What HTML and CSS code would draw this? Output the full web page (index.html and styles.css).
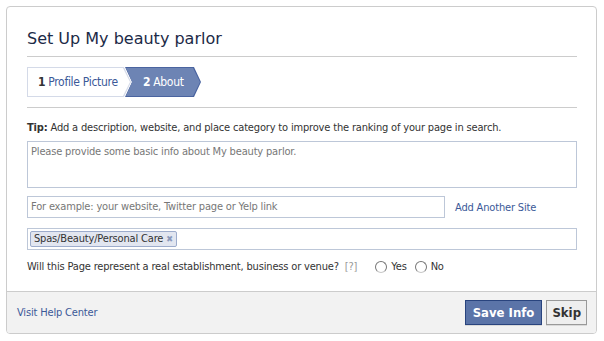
FILE: index.html
```html
<!DOCTYPE html>
<html lang="en">
<head>
    <meta charset="UTF-8">
    <title>Set Up My beauty parlor</title>
    <link rel="stylesheet" href="styles.css">
</head>
<body>
    <div class="dialog">
        <div class="dialog-body">
            <h2 class="dialog-title">Set Up My beauty parlor</h2>
            <div class="steps">
                <div class="step step-done"><div class="step-inner"><b>1</b> Profile Picture</div></div>
                <div class="step step-active"><div class="step-inner"><b>2</b> About</div></div>
            </div>
            <p class="tip"><b>Tip:</b> Add a description, website, and place category to improve the ranking of your page in search.</p>
            <div class="field field-area">Please provide some basic info about My beauty parlor.</div>
            <div class="site-row">
                <div class="field field-site">For example: your website, Twitter page or Yelp link</div>
                <a class="link" href="#">Add Another Site</a>
            </div>
            <div class="field field-tokens">
                <span class="token">Spas/Beauty/Personal Care <span class="token-x">✖</span></span>
            </div>
            <div class="question">
                <span>Will this Page represent a real establishment, business or venue?</span>
                <span class="help">[?]</span>
                <label class="radio"><span class="radio-dot"></span>Yes</label>
                <label class="radio"><span class="radio-dot"></span>No</label>
            </div>
        </div>
        <div class="dialog-footer">
            <a class="link" href="#">Visit Help Center</a>
            <div class="buttons">
                <button class="btn btn-primary">Save Info</button>
                <button class="btn">Skip</button>
            </div>
        </div>
    </div>
</body>
</html>
```

FILE: styles.css
```css
body {
    margin: 0;
    padding: 0;
    background-color: #ffffff;
    font-family: "DejaVu Sans Condensed", "DejaVu Sans", Tahoma, sans-serif;
    font-size: 11px;
    letter-spacing: -0.17px;
    color: #333333;
}
.dialog {
    margin: 6px;
    width: 589px;
    height: 326px;
    border: 1px solid #cccccc;
    border-radius: 4px;
    display: flex;
    flex-direction: column;
    overflow: hidden;
}
.dialog-body {
    flex-grow: 1;
    padding: 0 19px 0 20px;
}
.dialog-title {
    margin: 0;
    padding: 22px 0 8px;
    font-family: "DejaVu Sans", Tahoma, sans-serif;
    font-size: 16px;
    font-weight: normal;
    letter-spacing: 0;
    color: #1c2a47;
    border-bottom: 1px solid #cccccc;
}
.steps {
    display: flex;
    padding: 10px 0;
    border-bottom: 1px solid #cccccc;
}
.step {
    height: 30px;
    clip-path: polygon(0 0, calc(100% - 7px) 0, 100% 50%, calc(100% - 7px) 100%, 0 100%);
}
.step-inner {
    height: 28px;
    margin: 1px;
    display: flex;
    align-items: center;
    font-size: 12px;
    letter-spacing: -0.3px;
    clip-path: polygon(0 0, calc(100% - 7px) 0, 100% 50%, calc(100% - 7px) 100%, 0 100%);
}
.step-done {
    width: 104px;
    background-color: #d4dae8;
}
.step-done .step-inner {
    background-color: #ffffff;
    color: #3b5998;
    padding-left: 10px;
}
.step-done b {
    color: #333333;
    margin-right: 3px;
}
.step-active {
    width: 76px;
    margin-left: -6px;
    background-color: #4a64a0;
    clip-path: polygon(0 0, calc(100% - 7px) 0, 100% 50%, calc(100% - 7px) 100%, 0 100%, 7px 50%);
}
.step-active .step-inner {
    background-color: #6d84b4;
    color: #ffffff;
    padding-left: 17px;
    clip-path: polygon(0 0, calc(100% - 7px) 0, 100% 50%, calc(100% - 7px) 100%, 0 100%, 6px 50%);
}
.step-active b {
    margin-right: 3px;
}
.tip {
    margin: 13px 0 7px;
}
.field {
    border: 1px solid #bdc7d8;
    padding: 3px;
    color: #777777;
    box-sizing: border-box;
}
.field-area {
    height: 47px;
}
.site-row {
    display: flex;
    align-items: center;
    margin-top: 8px;
}
.field-site {
    width: 418px;
    height: 22px;
}
.site-row .link {
    margin-left: 10px;
}
.link {
    color: #3b5998;
    text-decoration: none;
}
.field-tokens {
    margin-top: 10px;
    height: 22px;
    padding: 2px;
}
.token {
    display: inline-block;
    background-color: #e2e6f0;
    border: 1px solid #9daccc;
    border-radius: 2px;
    color: #333333;
    padding: 0 3px;
    line-height: 14px;
}
.token-x {
    color: #8a99bb;
    font-size: 9px;
    font-weight: bold;
}
.question {
    display: flex;
    align-items: center;
    margin-top: 10px;
}
.help {
    color: #999999;
    margin-left: 6px;
    margin-right: 10px;
}
.radio {
    display: flex;
    align-items: center;
    margin-left: 8px;
}
.radio-dot {
    width: 10px;
    height: 10px;
    border: 1px solid #777777;
    border-bottom-color: #c8c8c8;
    border-radius: 50%;
    margin-right: 4px;
    background-color: #ffffff;
}
.dialog-footer {
    height: 41px;
    background-color: #f2f2f2;
    border-top: 1px solid #cccccc;
    display: flex;
    align-items: center;
    justify-content: space-between;
    padding: 0 9px 0 10px;
}
.buttons {
    display: flex;
    gap: 4px;
}
.btn {
    font-family: "DejaVu Sans Condensed", "DejaVu Sans", Tahoma, sans-serif;
    font-size: 13px;
    font-weight: bold;
    height: 25px;
    padding: 0 5px;
    border: 1px solid #999999;
    background-color: #eeeeee;
    color: #333333;
    box-shadow: 0 1px 0 rgba(0,0,0,0.1);
}
.btn-primary {
    padding: 0 7px;
    background-color: #5b74a8;
    border-color: #29447e;
    color: #ffffff;
}
```
